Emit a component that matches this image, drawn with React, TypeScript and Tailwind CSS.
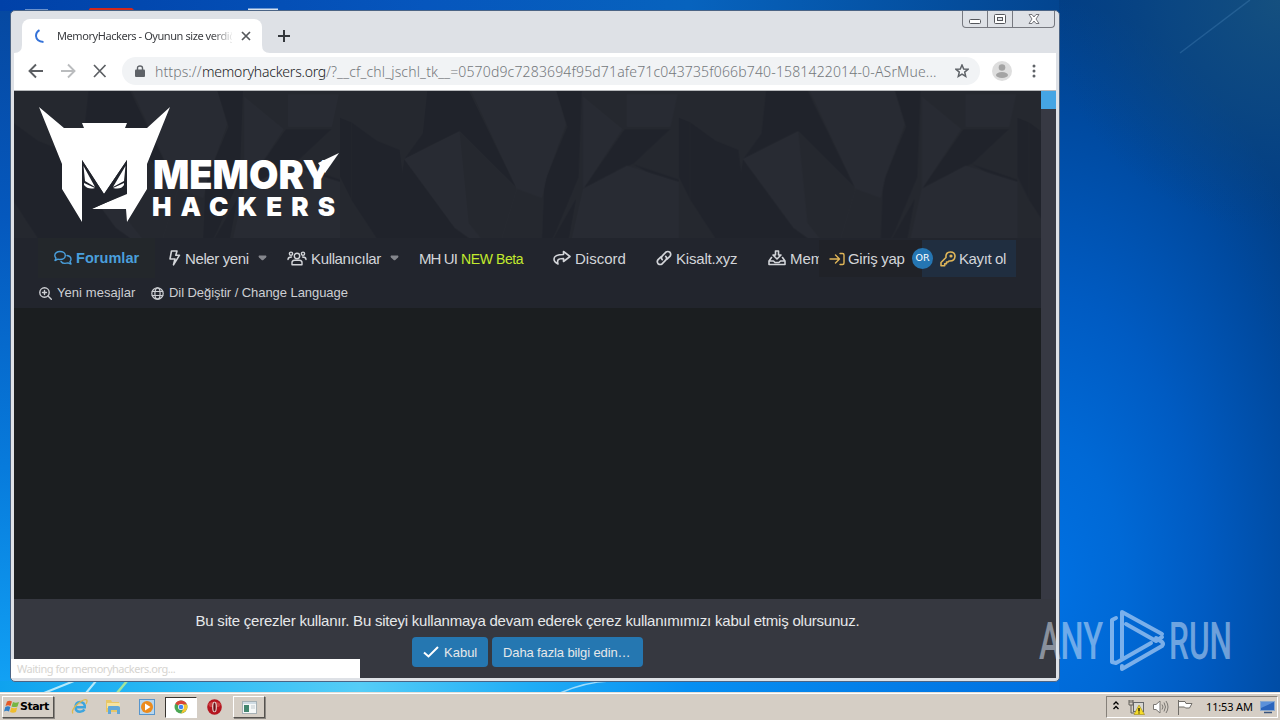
import type { ReactNode } from 'react';

const stroke = {
  fill: 'none',
  stroke: 'currentColor',
  strokeWidth: 1.4,
  strokeLinecap: 'round' as const,
  strokeLinejoin: 'round' as const,
};

function Wallpaper() {
  return (
    <svg className="absolute inset-0" width="1280" height="720" viewBox="0 0 1280 720">
      <defs>
        <linearGradient id="base" x1="0" y1="0" x2="0" y2="1">
          <stop offset="0" stopColor="#0648a0" />
          <stop offset="0.3" stopColor="#0558bd" />
          <stop offset="0.65" stopColor="#077bdc" />
          <stop offset="0.92" stopColor="#109df2" />
          <stop offset="1" stopColor="#17a9f6" />
        </linearGradient>
        <radialGradient id="side" cx="0" cy="0" r="1" gradientUnits="userSpaceOnUse" gradientTransform="translate(1045 590) scale(320 590)">
          <stop offset="0" stopColor="#0071e3" />
          <stop offset="0.25" stopColor="#0069d6" />
          <stop offset="0.5" stopColor="#005bc2" />
          <stop offset="0.8" stopColor="#004aa0" />
          <stop offset="1" stopColor="#023f86" />
        </radialGradient>
        <radialGradient id="topShade" cx="1280" cy="0" r="230" gradientUnits="userSpaceOnUse">
          <stop offset="0" stopColor="#15507f" />
          <stop offset="0.5" stopColor="#0f4a80" stopOpacity="0.6" />
          <stop offset="1" stopColor="#08427f" stopOpacity="0" />
        </radialGradient>
        <linearGradient id="topStrip">
          <stop offset="0" stopColor="#0041a8" />
          <stop offset="0.4" stopColor="#0656bd" />
          <stop offset="0.65" stopColor="#0763be" />
          <stop offset="1" stopColor="#034590" />
        </linearGradient>
        <linearGradient id="bottomStrip">
          <stop offset="0" stopColor="#0fa2ee" />
          <stop offset="0.15" stopColor="#29b8f4" />
          <stop offset="0.34" stopColor="#55cdf7" />
          <stop offset="0.5" stopColor="#20adf6" />
          <stop offset="0.65" stopColor="#078ff2" />
          <stop offset="1" stopColor="#006fe0" />
        </linearGradient>
      </defs>
      <rect width="1280" height="720" fill="url(#base)" />
      <rect x="1050" width="230" height="720" fill="url(#side)" />
      <rect x="1050" width="230" height="240" fill="url(#topShade)" />
      <rect width="1059" height="11" fill="url(#topStrip)" />
      <rect y="681" width="1059" height="12" fill="url(#bottomStrip)" />
      <path d="M1180 53 1250 0" stroke="#4b87bb" strokeOpacity="0.35" strokeWidth="1.5" />
      <path d="M44 693 74 681M86 693 96 681" stroke="#b6e9fa" strokeWidth="2" />
      <path d="M117 693 127 681" stroke="#a4e59d" strokeWidth="2.5" />
      <path d="M560 693Q585 682 610 681" fill="none" stroke="#a0dcfb" strokeWidth="1.5" />
      <path d="M90 8H132L135 11H88z" fill="#d3281c" />
      <path d="M248 8.500h30v2.500h-30zM25 9.500h23v1H25z" fill="#d5e1ef" />
    </svg>
  );
}

function RockPattern() {
  return (
    <svg className="absolute inset-0" width="1027" height="147">
      <defs>
        <pattern id="rock" width="738" height="460" patternUnits="userSpaceOnUse" patternTransform="translate(326 -1) scale(0.459)">
          <rect width="738" height="460" fill="#25282f" />
          <g fill="#20232b">
            <path d="M25 70 80 110 130 130 140 210 110 370 25 240z" />
            <path d="M190 0H280L385 215 330 160 260 90 140 150 180 95z" />
            <path d="M130 210 140 150 250 300 340 365 110 375z" />
            <path d="M470 0H527L520 190 470 310 438 370 445 200 495 80z" />
            <path d="M438 370 515 235 478 435 475 460H435z" />
            <path d="M620 85H720L640 160 530 215z" />
            <path d="M635 160 738 195V208L690 190z" />
            <path d="M480 435 620 370 650 460H465z" />
            <path d="M0 60 25 70V240L0 190zM115 375 160 450H125z" />
          </g>
          <g fill="#282b33">
            <path d="M140 150 260 90 385 215 340 365 250 300z" />
            <path d="M285 0H470L492 75 450 190 440 235 385 215z" />
            <path d="M530 15 615 85 530 215z" />
            <path d="M625 10H735L720 80H625z" />
            <path d="M530 215 625 165 738 200V370H620L480 435z" />
          </g>
          <path d="M260 90 385 215 340 365 280 290z" fill="#25282f" />
          <path d="M110 375 340 368 320 440 150 445z" fill="#272a31" />
        </pattern>
      </defs>
      <rect width="1027" height="147" fill="url(#rock)" />
    </svg>
  );
}

function Logo() {
  return (
    <svg className="absolute left-0 top-0" width="340" height="147" viewBox="14 91 340 147" fill="#fff">
      <path d="M39 107 64 128H84L82 123H127L125 128H147L170 107 147 164V189L127 222 126 209H92L127 193V160L104 194 82 160V222L62 189V164z" />
      <path d="M82 160 104 194 127 160V194L91 209H82z" fill="#20232b" />
      <path d="M83.500 166 95 187 85 181zM125.500 166 113 187 124 181zM84 183 95 188Q88 190 84 185zM124 183 113 188Q121 190 124 185z" />
      <text x="153" y="189" fontFamily="Inter" fontWeight="900" fontSize="40" textLength="179" lengthAdjust="spacingAndGlyphs">MEMORY</text>
      <path d="M318 163 339 153 325 173z" />
      <text x="152" y="216" fontFamily="Inter" fontWeight="900" fontSize="26" textLength="183" lengthAdjust="spacing">HACKERS</text>
    </svg>
  );
}

function Chats() {
  return (
    <svg width="18" height="16" viewBox="0 0 18 16" {...stroke}>
      <path d="M6 1.500C9 1.500 11.300 3.200 11.300 5.500S9 9.500 6 9.500Q4.800 9.500 4 9.200L1 10.500 2 8Q.8 7 .8 5.500C.8 3.200 3 1.500 6 1.500zM13 5.500C15.500 6 17 7.500 17 9.300Q17 10.600 16 11.600L17 14 14 12.900C11 13.700 8 13 7 11.500" />
    </svg>
  );
}

function Bolt() {
  return (
    <svg width="13" height="16" viewBox="0 0 13 16" {...stroke} strokeWidth={1.6}>
      <path d="M3.500 1H9L7.800 5.200H11.500L5.500 14.800 7 9H2z" />
    </svg>
  );
}

function Users() {
  return (
    <svg width="20" height="15" viewBox="0 0 20 15" {...stroke}>
      <circle cx="10" cy="5" r="2.700" />
      <circle cx="4" cy="2.700" r="1.600" />
      <circle cx="16" cy="2.700" r="1.600" />
      <path d="M5 13.700V11.500Q5 9.500 7.500 9.200H12.500Q15 9.500 15 11.500V13.700zM1 8.500Q1 6 4.500 6M19 8.500Q19 6 15.500 6" />
    </svg>
  );
}

function ShareArrow() {
  return (
    <svg width="18" height="16" viewBox="0 0 18 16" {...stroke} strokeWidth={1.6}>
      <path d="M10.500 1.500 17 6.500 10.500 11.500V8.500Q6 8.500 5 10 4.200 11.500 5 14 1 12 1 9 1 4.500 10.500 4.500z" />
    </svg>
  );
}

function ChainLink() {
  return (
    <svg width="16" height="16" viewBox="0 0 16 16" {...stroke} strokeWidth={1.7}>
      <path d="M6.300 9.700Q4.500 7.700 6.300 5.800L9.700 2.300Q11.800.7 13.900 2.300 15.500 4.400 13.900 6.400L11 9.200M9.700 6.300Q11.500 8.300 9.700 10.200L6.300 13.700Q4.200 15.300 2.100 13.700.5 11.600 2.100 9.600L5 6.800" />
    </svg>
  );
}

function Inbox() {
  return (
    <svg width="18" height="16" viewBox="0 0 18 16" {...stroke} strokeWidth={1.6}>
      <path d="M7.500 1H10.500V5H13L9 9 5 5H7.500zM3.500 7.500 1 11V14.500H17V11L14.500 7.500M1 11H5.500L7 12.500H11L12.500 11H17" />
    </svg>
  );
}

function SignIn() {
  return (
    <svg width="16" height="14" viewBox="0 0 16 14" {...stroke}>
      <path d="M1 7H10M6.500 3 10.500 7 6.500 11M11 1.500H13.500Q15 1.500 15 3V11Q15 12.500 13.500 12.500H11" />
    </svg>
  );
}

function Key() {
  return (
    <svg width="16" height="16" viewBox="0 0 16 16" {...stroke} strokeWidth={1.6}>
      <path d="M6 6.500Q5.500 1 10.500 1 15 1 15 5.500 14.500 10.500 9 10L8 11H6.500V12.800H4.700V14.800H1V11.500z" />
      <circle cx="11" cy="5" r="0.800" />
    </svg>
  );
}

function Caret() {
  return (
    <svg width="9" height="6" viewBox="0 0 9 6">
      <path d="M1 .5H8Q9 1.500 8 2.500L5.300 5Q4.500 5.700 3.700 5L1 2.500Q0 1.500 1 .5z" fill="#84868c" />
    </svg>
  );
}

function NavItem({ icon, children, className }: { icon?: ReactNode; children: ReactNode; className: string }) {
  return (
    <div className={`flex h-full shrink-0 items-center whitespace-nowrap ${className}`}>
      {icon}
      {children}
    </div>
  );
}

function TabStrip() {
  return (
    <div className="relative flex h-[42px] items-end pl-[11px]">
      <div className="relative flex h-[34px] w-[240px] items-center rounded-t-lg bg-white pl-[13px]">
        <svg className="absolute -left-2 bottom-0" width="8" height="8">
          <path d="M8 0V8H0Q8 8 8 0" fill="#fff" />
        </svg>
        <svg className="absolute -right-2 bottom-0" width="8" height="8">
          <path d="M0 0V8H8Q0 8 0 0" fill="#fff" />
        </svg>
        <svg width="14" height="14" viewBox="0 0 14 14">
          <path d="M4.500 1.200Q1 3.200 1 7 1.500 12.500 8.500 13" fill="none" stroke="#3472d8" strokeWidth="2" />
        </svg>
        <div className="ml-[8px] w-[175px] overflow-hidden whitespace-nowrap bg-linear-to-r from-[#35373b] from-88% to-[#eeeeee] bg-clip-text font-['Noto_Sans'] text-[11px] tracking-[-0.43px] text-transparent">
          MemoryHackers - Oyunun size verdiği
        </div>
        <svg className="ml-[9px]" width="10" height="10" viewBox="0 0 10 10">
          <path d="M1 1 9 9M9 1 1 9" stroke="#55585c" strokeWidth="1.700" />
        </svg>
      </div>
      <svg className="mb-[11px] ml-4" width="12" height="12" viewBox="0 0 12 12">
        <path d="M6 0V12M0 6H12" stroke="#34373c" strokeWidth="2" />
      </svg>
      <div className="absolute right-[4px] top-0 flex h-[17px] w-[93px] rounded-b border border-t-0 border-[#777980]">
        <div className="flex w-[25px] items-center justify-center border-r border-[#777980]">
          <svg width="12" height="12"><rect x="0.500" y="6.500" width="11" height="4" rx="1" fill="#fff" stroke="#55575c" /></svg>
        </div>
        <div className="flex w-[25px] items-center justify-center border-r border-[#777980]">
          <svg width="12" height="10"><rect x="0.500" y="0.500" width="11" height="9" rx="1" fill="#fff" stroke="#55575c" /><rect x="3.500" y="3.500" width="5" height="3" fill="#dee1e6" stroke="#55575c" /></svg>
        </div>
        <div className="flex flex-1 items-center justify-center">
          <svg width="12" height="10" viewBox="0 0 12 10">
            <path d="M1 .5H4L6 3 8 .5H11L8 5 11 9.500H8L6 7 4 9.500H1L4 5z" fill="#fff" stroke="#66686e" strokeWidth="0.900" />
          </svg>
        </div>
      </div>
    </div>
  );
}

function Toolbar() {
  return (
    <div className="ml-[3px] flex h-[38px] w-[1042px] items-center border-b border-[#b6b8bb] bg-white pb-px">
      <svg className="ml-[14px]" width="80" height="16" viewBox="0 0 80 16" fill="none" strokeWidth="1.900">
        <path d="M15 8H2M8 1.500 1.500 8 8 14.500" stroke="#5c5f63" />
        <path d="M33 8H46M40 1.500 46.500 8 40 14.500" stroke="#babcbe" />
        <path d="M66 2 77.500 14M77.500 2 66 14" stroke="#5c5f63" strokeWidth="1.700" />
      </svg>
      <div className="ml-[14px] flex h-7 w-[858px] items-center rounded-full bg-[#f1f3f5] pl-[13px]">
        <svg width="10" height="12" viewBox="0 0 10 12">
          <path d="M2.500 5V3Q2.500 1 5 1T7.500 3V5" fill="none" stroke="#5f6368" strokeWidth="1.400" />
          <rect y="4.500" width="10" height="7.500" rx="1" fill="#5f6368" />
        </svg>
        <div className="ml-[10px] flex w-[783px] shrink-0 whitespace-nowrap font-['Noto_Sans'] text-[14px] font-light text-[#74787c]">
          <span className="w-[47px] tracking-[0.1px]">https://</span>
          <span className="w-[124px] tracking-[-0.22px] text-[#202124]">memoryhackers.org</span>
          <span className="tracking-[0.16px]">/?__cf_chl_jschl_tk__=0570d9c7283694f95d71afe71c043735f066b740-1581422014-0-ASrMue...</span>
        </div>
        <svg className="ml-[17px]" width="14" height="14" viewBox="0 0 14 14">
          <path d="M7 1 8.700 5 13 5.300 9.700 8.100 10.700 12.400 7 10.100 3.300 12.400 4.300 8.100 1 5.300 5.300 5z" fill="none" stroke="#5f6368" strokeWidth="1.500" />
        </svg>
      </div>
      <svg className="ml-[12px]" width="20" height="20" viewBox="0 0 20 20">
        <circle cx="10" cy="10" r="10" fill="#dedede" />
        <circle cx="10" cy="6.500" r="3.300" fill="#a4a4a4" />
        <ellipse cx="10" cy="14" rx="6" ry="3" fill="#a4a4a4" />
      </svg>
      <svg className="ml-[20px]" width="4" height="14" fill="#5f6368">
        <circle cx="2" cy="2" r="1.500" />
        <circle cx="2" cy="7" r="1.500" />
        <circle cx="2" cy="12" r="1.500" />
      </svg>
    </div>
  );
}

function Site() {
  return (
    <div className="relative ml-[3px] flex h-[587px] w-[1042px] bg-[#373943] font-['Liberation_Sans']">
      <div className="flex w-[1027px] flex-col bg-[#1b1e20]">
        <div className="relative h-[147px] overflow-hidden">
          <RockPattern />
          <Logo />
        </div>
        <div className="relative h-[40px] bg-[#22252d] pl-[24px] text-[15px] text-[#d3d5d9]">
          <div className="flex h-full w-[781px] items-center overflow-hidden">
            <NavItem icon={<Chats />} className="w-[117px] bg-[#23272b] pl-[16px] text-[14.5px] font-bold text-[#4a9fdc]">
              <span className="ml-[4px] pt-px tracking-[0.05px]">Forumlar</span>
            </NavItem>
            <NavItem icon={<Bolt />} className="w-[119px] pl-[13px]">
              <span className="ml-[4px] mr-[9px] w-[64px] pt-0.5 tracking-[-0.38px]">Neler yeni</span>
              <Caret />
            </NavItem>
            <NavItem icon={<Users />} className="w-[145px] pl-[13px]">
              <span className="ml-[4px] mr-[9px] w-[70px] pt-0.5 tracking-[-0.35px]">Kullanıcılar</span>
              <Caret />
            </NavItem>
            <NavItem className="w-[134px] pt-0.5">
              <span className="w-[42px] tracking-[-0.9px]">MH UI</span>
              <span className="text-[14px] tracking-[-0.4px] text-[#c2ea2d]">NEW Beta</span>
            </NavItem>
            <NavItem icon={<ShareArrow />} className="w-[103px]">
              <span className="ml-[4px] pt-0.5">Discord</span>
            </NavItem>
            <NavItem icon={<ChainLink />} className="w-[112px]">
              <span className="ml-[4px] pt-0.5 tracking-[-0.2px]">Kisalt.xyz</span>
            </NavItem>
            <NavItem icon={<Inbox />} className="w-[80px]">
              <span className="ml-[4px] pt-0.5 tracking-[-0.1px]">Memory</span>
            </NavItem>
          </div>
          <div className="absolute left-[805px] top-[2px] flex h-[37px] w-[197px] bg-[#202228]">
            <div className="flex w-[103px] items-center pl-[10px]">
              <span className="text-[#e0b658]"><SignIn /></span>
              <span className="ml-[3px] whitespace-nowrap pt-px tracking-[-0.3px]">Giriş yap</span>
            </div>
            <div className="flex w-[94px] items-center bg-[#202e40] pl-[18px]">
              <span className="text-[#e0b658]"><Key /></span>
              <span className="ml-[3px] whitespace-nowrap pt-px tracking-[-0.4px]">Kayıt ol</span>
            </div>
            <div className="absolute left-[93px] top-[8px] flex h-[21px] w-[21px] items-center justify-center rounded-full bg-[#2576b3] font-['DejaVu_Sans'] text-[9.5px] text-white">OR</div>
          </div>
        </div>
        <div className="flex h-[30px] items-center bg-[#22252d] pl-[25px] text-[13px] text-[#cdcfd3]">
          <svg width="13" height="13" viewBox="0 0 13 13" {...stroke}>
            <circle cx="5.500" cy="5.500" r="4.700" />
            <path d="M9 9 12.300 12.300M5.500 3.500V7.500M3.500 5.500H7.500" />
          </svg>
          <span className="ml-[5px] w-[78px] whitespace-nowrap tracking-[0.06px]">Yeni mesajlar</span>
          <svg className="ml-[16px]" width="13" height="13" viewBox="0 0 13 13" {...stroke} strokeWidth={1.2}>
            <circle cx="6.500" cy="6.500" r="5.700" />
            <ellipse cx="6.500" cy="6.500" rx="2.600" ry="5.700" />
            <path d="M1.200 4.500H11.800M1.200 8.500H11.800" />
          </svg>
          <span className="ml-[5px] whitespace-nowrap tracking-[-0.06px]">Dil Değiştir / Change Language</span>
        </div>
      </div>
      <div className="h-[18px] w-[15px] bg-[#45a5e4]" />

      <div className="absolute bottom-0 left-0 flex h-[79px] w-[1042px] flex-col items-center bg-[#363840] pr-[15px] text-[#e6e8ea]">
        <div className="mt-[12px] h-[20px] whitespace-nowrap text-[15px] leading-[20px] tracking-[-0.215px]">
          Bu site çerezler kullanır. Bu siteyi kullanmaya devam ederek çerez kullanımımızı kabul etmiş olursunuz.
        </div>
        <div className="mt-[6px] flex h-[30px] gap-1 text-[13px]">
          <div className="flex w-[76px] items-center rounded bg-[#2577b1] pl-[11px]">
            <svg width="16" height="12" viewBox="0 0 16 12">
              <path d="M1 6.500 5.500 10.500 15 1" fill="none" stroke="#fff" strokeWidth="2" />
            </svg>
            <span className="ml-[5px] pt-px">Kabul</span>
          </div>
          <div className="flex w-[151px] items-center whitespace-nowrap rounded bg-[#2577b1] pl-[11px] pt-px tracking-[-0.12px]">Daha fazla bilgi edin…</div>
        </div>
      </div>
      <div className="absolute -left-[3px] bottom-0 h-[19px] w-[349px] bg-white pl-[6px] font-['Noto_Sans'] text-[11px] leading-[19px] tracking-[-0.48px] text-[#d6d4d0]">
        Waiting for memoryhackers.org...
      </div>
    </div>
  );
}

function Watermark() {
  return (
    <svg className="absolute left-[1030px] top-[590px]" width="230" height="100" viewBox="1030 590 230 100">
      <g fill="#dce9f8" fillOpacity="0.5" fontFamily="Roboto" fontWeight="500" fontSize="51">
        <text x="1039" y="659" textLength="64" lengthAdjust="spacingAndGlyphs">ANY</text>
        <text x="1169" y="659" textLength="63" lengthAdjust="spacingAndGlyphs">RUN</text>
      </g>
      <g fill="none" stroke="#bbd7f7" strokeOpacity="0.65" strokeWidth="4" strokeLinejoin="round" strokeLinecap="round">
        <path d="M1116 618 1112 620V662L1116 663 1151 643M1122 658V612L1162 634M1126 624 1156 641 1162 637M1122 669 1162 646Q1164 644 1162 642L1156 638M1122 669 1122 666" />
      </g>
    </svg>
  );
}

function Taskbar() {
  return (
    <div className="absolute inset-x-0 bottom-0 flex h-7 items-center border-t border-[#e5e0d9] bg-[#d5cec5] pl-[2px] pr-[2px] shadow-[inset_0_1px_0_#fff]">
      <div className="mt-px flex h-[22px] w-[52px] items-center border border-b-[#55524e] border-l-white border-r-[#55524e] border-t-white pl-px shadow-[1px_1px_0_#8c8883]">
        <svg width="16" height="16" viewBox="0 0 16 16">
          <path d="M3 2.500Q5.500 1 8 2.500L6.500 7Q4 5.500 1.500 7z" fill="#e55a28" />
          <path d="M9 3Q11.500 4.500 15 3L13.500 7.500Q10.500 8.500 7.500 7.500z" fill="#76b643" />
          <path d="M1.300 8Q4 6.500 6.300 8L5 12.500Q2.500 11 0 12.500z" fill="#327fc7" />
          <path d="M7.300 8.500Q10 10 13.200 8.500L12 13Q9 14.500 6 13z" fill="#efbd2e" />
        </svg>
        <span className="font-['DejaVu_Sans'] text-[11px] font-bold tracking-[-0.5px] text-black">Start</span>
      </div>

      <svg className="ml-[17px]" width="17" height="17" viewBox="0 0 17 17">
        <path d="M4.500 9.300H13.800Q14 4 9 4 4.500 4 4.500 9 4.500 13.800 9 13.800 12 13.800 13.500 11.500" fill="none" stroke="#3da5de" strokeWidth="2.400" />
        <path d="M2 15.500Q0 13 5 7.500 13 0 15.800 2 16.500 3.500 15 6" fill="none" stroke="#dfb94e" strokeWidth="1.300" />
      </svg>
      <svg className="ml-[17px]" width="17" height="17" viewBox="0 0 17 17">
        <path d="M1 2H6L7 4H14V14H1z" fill="#e8c767" />
        <path d="M2 5H15V10H2z" fill="#f5e3a0" />
        <path d="M3 16V9Q3 8 4 8H13Q15 8 15 9.500V16H12V12H6V16z" fill="#62a8d8" />
      </svg>
      <svg className="ml-[17px]" width="16" height="16" viewBox="0 0 16 16">
        <rect x="0.500" y="0.500" width="15" height="15" fill="#b7d6ee" stroke="#5795cc" />
        <circle cx="8" cy="8" r="6" fill="#ec8b1d" />
        <path d="M6 4.500V11.500L11.500 8z" fill="#fff" />
      </svg>
      <div className="ml-[10px] mt-px flex h-[21px] w-[32px] items-center justify-center border border-b-white border-l-[#38342f] border-r-white border-t-[#38342f] bg-white">
        <svg width="14" height="14" viewBox="0 0 14 14">
          <circle cx="7" cy="7" r="6.500" fill="#4aa653" />
          <path d="M7 7 1.300 3.700Q3.500.5 7 .5 11 .5 13 4.500H7z" fill="#db4437" />
          <path d="M7 4.500H13Q15 11 7 13.500L9.500 8.500z" fill="#f7c531" />
          <circle cx="7" cy="7" r="3" fill="#fff" />
          <circle cx="7" cy="7" r="2.300" fill="#4285f4" />
        </svg>
      </div>
      <svg className="ml-[10px]" width="15" height="16" viewBox="0 0 15 16">
        <ellipse cx="7.500" cy="8" rx="7.300" ry="7.700" fill="#b51620" />
        <path d="M1 5Q7 .5 14 5L12 8H3z" fill="#df5f5b" fillOpacity="0.6" />
        <ellipse cx="7.500" cy="8" rx="2.400" ry="5.300" fill="#e9d8d4" />
        <ellipse cx="7.500" cy="8" rx="1.200" ry="4.500" fill="#701017" />
      </svg>
      <div className="ml-[11px] mt-px flex h-[22px] w-[32px] items-center justify-center border border-b-[#55524e] border-l-white border-r-[#55524e] border-t-white shadow-[1px_1px_0_#8c8883]">
        <svg width="15" height="13" viewBox="0 0 15 13">
          <rect x="0.500" y="0.500" width="14" height="12" fill="#f6f8f8" stroke="#a6b0b4" />
          <rect x="1" y="1" width="13" height="2" fill="#d0dce4" />
          <rect x="2" y="4" width="5" height="7" fill="#43866f" />
          <path d="M9 5H13M9 7H13" stroke="#c3cbcf" />
        </svg>
      </div>

      <div className="ml-auto mt-px flex h-[22px] w-[172px] items-center border border-b-white border-l-[#858079] border-r-white border-t-[#858079] pl-[6px]">
        <svg className="mb-[3px]" width="6" height="9" viewBox="0 0 6 9" fill="none" stroke="#000" strokeWidth="1.300">
          <path d="M.5 3.500 3 1 5.500 3.500M.5 8 3 5.500 5.500 8" />
        </svg>
        <svg className="ml-[9px]" width="17" height="16" viewBox="0 0 17 16">
          <rect x="5.500" y="3.500" width="10" height="9" fill="#d7d7d3" stroke="#65676a" />
          <path d="M1 1V6H5V1M3 6V14H6M2 1V4M4 1V4" fill="none" stroke="#62605b" />
          <path d="M11 6 16.500 15.500H6z" fill="#f6dc29" stroke="#9b8614" strokeWidth="0.600" />
          <path d="M11 9V12.500M11 13.500V14.500" stroke="#000" strokeWidth="1.200" />
        </svg>
        <svg className="ml-[8px]" width="16" height="14" viewBox="0 0 16 14" fill="none" stroke="#7a7772">
          <path d="M.5 4.500H3L7 1V13L3 9.500H.5z" fill="#fff" />
          <path d="M9 4.500Q11 7 9 9.500M11 2.500Q14 7 11 11.500M13 1Q17 7 13 13" />
        </svg>
        <svg className="ml-[8px]" width="16" height="15" viewBox="0 0 16 15">
          <path d="M1.500 0V15M1.500 1.500H8L9 3.500H15L12.500 8H8.500L7.500 7H1.500z" fill="#fff" stroke="#716e69" />
        </svg>
        <span className="ml-[13px] w-[47px] whitespace-nowrap font-['Noto_Sans'] text-[11px] tracking-[-0.15px] text-black">11:53 AM</span>
        <svg className="ml-[7px]" width="15" height="14" viewBox="0 0 15 14">
          <rect x="0.500" y="1.500" width="14" height="9" fill="#2b65bd" stroke="#8aa9cf" />
          <path d="M1 2H14L1 8z" fill="#5c91da" />
          <path d="M4 12.500H12" stroke="#39547c" strokeWidth="1.500" />
        </svg>
      </div>
    </div>
  );
}

export default function App() {
  return (
    <div className="relative h-[720px] w-[1280px] overflow-hidden bg-[#0558bd]">
      <Wallpaper />
      <div className="absolute left-[10px] top-[10px] h-[672px] w-[1050px] overflow-hidden rounded-[5px] border border-[#4b6485] bg-[#dee1e6]">
        <TabStrip />
        <Toolbar />
        <Site />
      </div>
      <Watermark />
      <Taskbar />
    </div>
  );
}
